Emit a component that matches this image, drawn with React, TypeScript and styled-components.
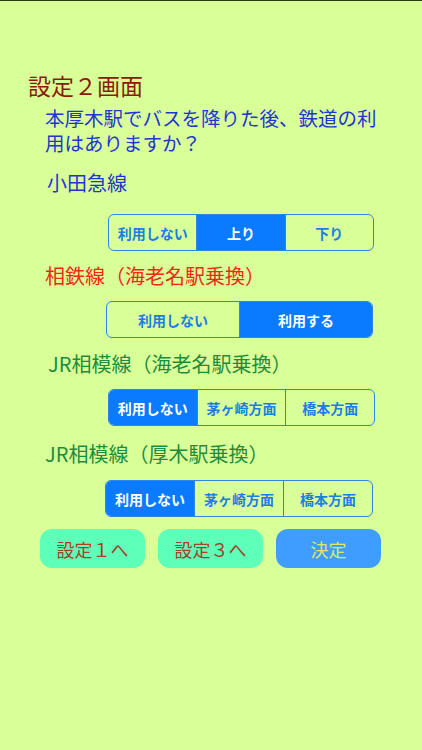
import React, { useState } from "react";
import styled, { createGlobalStyle, css } from "styled-components";

const GlobalStyle = createGlobalStyle`
  html, body {
    margin: 0;
    padding: 0;
    background: #d9ff99;
  }
  body {
    font-family: "Noto Sans CJK JP", "Noto Sans", sans-serif;
  }
`;

const Screen = styled.div`
  display: flex;
  flex-direction: column;
  align-items: flex-start;
  min-height: 750px;
  box-sizing: border-box;
  padding-top: 70px;
  border-top: 1px solid #2b3a12;
  background: #d9ff99;
`;

const Title = styled.h1`
  margin: 0 0 0 28px;
  color: #8a1c06;
  font-size: 23px;
  font-weight: 400;
  line-height: 28px;
`;

const Question = styled.p`
  width: 345px;
  margin: 6px 0 0 45px;
  color: #1f36d2;
  font-size: 19.5px;
  line-height: 25px;
`;

type Tone = "blue" | "red" | "green";

const toneColor: Record<Tone, string> = {
  blue: "#1f36d2",
  red: "#ef2a12",
  green: "#1f8c3a",
};

const LineHeading = styled.h2<{ $tone: Tone; $indent: number; $gap: number }>`
  margin: ${({ $gap }) => $gap}px 0 0 ${({ $indent }) => $indent}px;
  color: ${({ $tone }) => toneColor[$tone]};
  font-size: 20px;
  font-weight: 400;
  line-height: 26px;
`;

const Segmented = styled.div<{ $indent: number; $gap: number; $width: number }>`
  display: flex;
  width: ${({ $width }) => $width}px;
  height: 37px;
  box-sizing: border-box;
  margin: ${({ $gap }) => $gap}px 0 0 ${({ $indent }) => $indent}px;
  overflow: hidden;
  border: 1.5px solid #2d86ea;
  border-radius: 6px;
`;

const SegmentButton = styled.button<{ $active: boolean }>`
  flex: 1 1 0;
  min-width: 0;
  padding: 0;
  border: 0;
  border-left: 1.5px solid #2d86ea;
  color: #1c7de6;
  background: transparent;
  font-family: inherit;
  font-size: 14px;
  font-weight: 700;
  cursor: pointer;

  &:first-child {
    border-left: 0;
  }

  ${({ $active }) =>
    $active &&
    css`
      color: #ffffff;
      background: #0a7bff;
    `}
`;

const ActionRow = styled.div`
  display: flex;
  gap: 13px;
  margin: 12px 0 0 40px;
`;

const ActionButton = styled.button<{ $primary?: boolean }>`
  width: 105px;
  height: 39px;
  padding: 0;
  border: 0;
  border-radius: 12px;
  color: #a4422a;
  background: #5effb9;
  font-family: inherit;
  font-size: 18px;
  cursor: pointer;

  ${({ $primary }) =>
    $primary &&
    css`
      color: #dde472;
      background: #3f9dff;
    `}
`;

interface LineSetting {
  key: string;
  label: string;
  tone: Tone;
  headingIndent: number;
  headingGap: number;
  segIndent: number;
  segGap: number;
  segWidth: number;
  options: string[];
  initial: number;
}

const lines: LineSetting[] = [
  {
    key: "odakyu",
    label: "小田急線",
    tone: "blue",
    headingIndent: 47,
    headingGap: 15,
    segIndent: 108,
    segGap: 18,
    segWidth: 266,
    options: ["利用しない", "上り", "下り"],
    initial: 1,
  },
  {
    key: "sotetsu",
    label: "相鉄線（海老名駅乗換）",
    tone: "red",
    headingIndent: 45,
    headingGap: 12,
    segIndent: 106,
    segGap: 12,
    segWidth: 267,
    options: ["利用しない", "利用する"],
    initial: 1,
  },
  {
    key: "sagami-ebina",
    label: "JR相模線（海老名駅乗換）",
    tone: "green",
    headingIndent: 48,
    headingGap: 13,
    segIndent: 108,
    segGap: 12,
    segWidth: 267,
    options: ["利用しない", "茅ヶ崎方面", "橋本方面"],
    initial: 0,
  },
  {
    key: "sagami-atsugi",
    label: "JR相模線（厚木駅乗換）",
    tone: "green",
    headingIndent: 45,
    headingGap: 15,
    segIndent: 105,
    segGap: 13,
    segWidth: 268,
    options: ["利用しない", "茅ヶ崎方面", "橋本方面"],
    initial: 0,
  },
];

export default function App() {
  const [selected, setSelected] = useState<Record<string, number>>(() =>
    Object.fromEntries(lines.map((line) => [line.key, line.initial]))
  );

  return (
    <>
      <GlobalStyle />
      <Screen>
        <Title>設定２画面</Title>
        <Question>本厚木駅でバスを降りた後、鉄道の利用はありますか？</Question>
        {lines.map((line) => (
          <React.Fragment key={line.key}>
            <LineHeading
              $tone={line.tone}
              $indent={line.headingIndent}
              $gap={line.headingGap}
            >
              {line.label}
            </LineHeading>
            <Segmented
              $indent={line.segIndent}
              $gap={line.segGap}
              $width={line.segWidth}
            >
              {line.options.map((option, index) => (
                <SegmentButton
                  key={option}
                  $active={selected[line.key] === index}
                  onClick={() =>
                    setSelected((prev) => ({ ...prev, [line.key]: index }))
                  }
                >
                  {option}
                </SegmentButton>
              ))}
            </Segmented>
          </React.Fragment>
        ))}
        <ActionRow>
          <ActionButton>設定１へ</ActionButton>
          <ActionButton>設定３へ</ActionButton>
          <ActionButton $primary>決定</ActionButton>
        </ActionRow>
      </Screen>
    </>
  );
}
